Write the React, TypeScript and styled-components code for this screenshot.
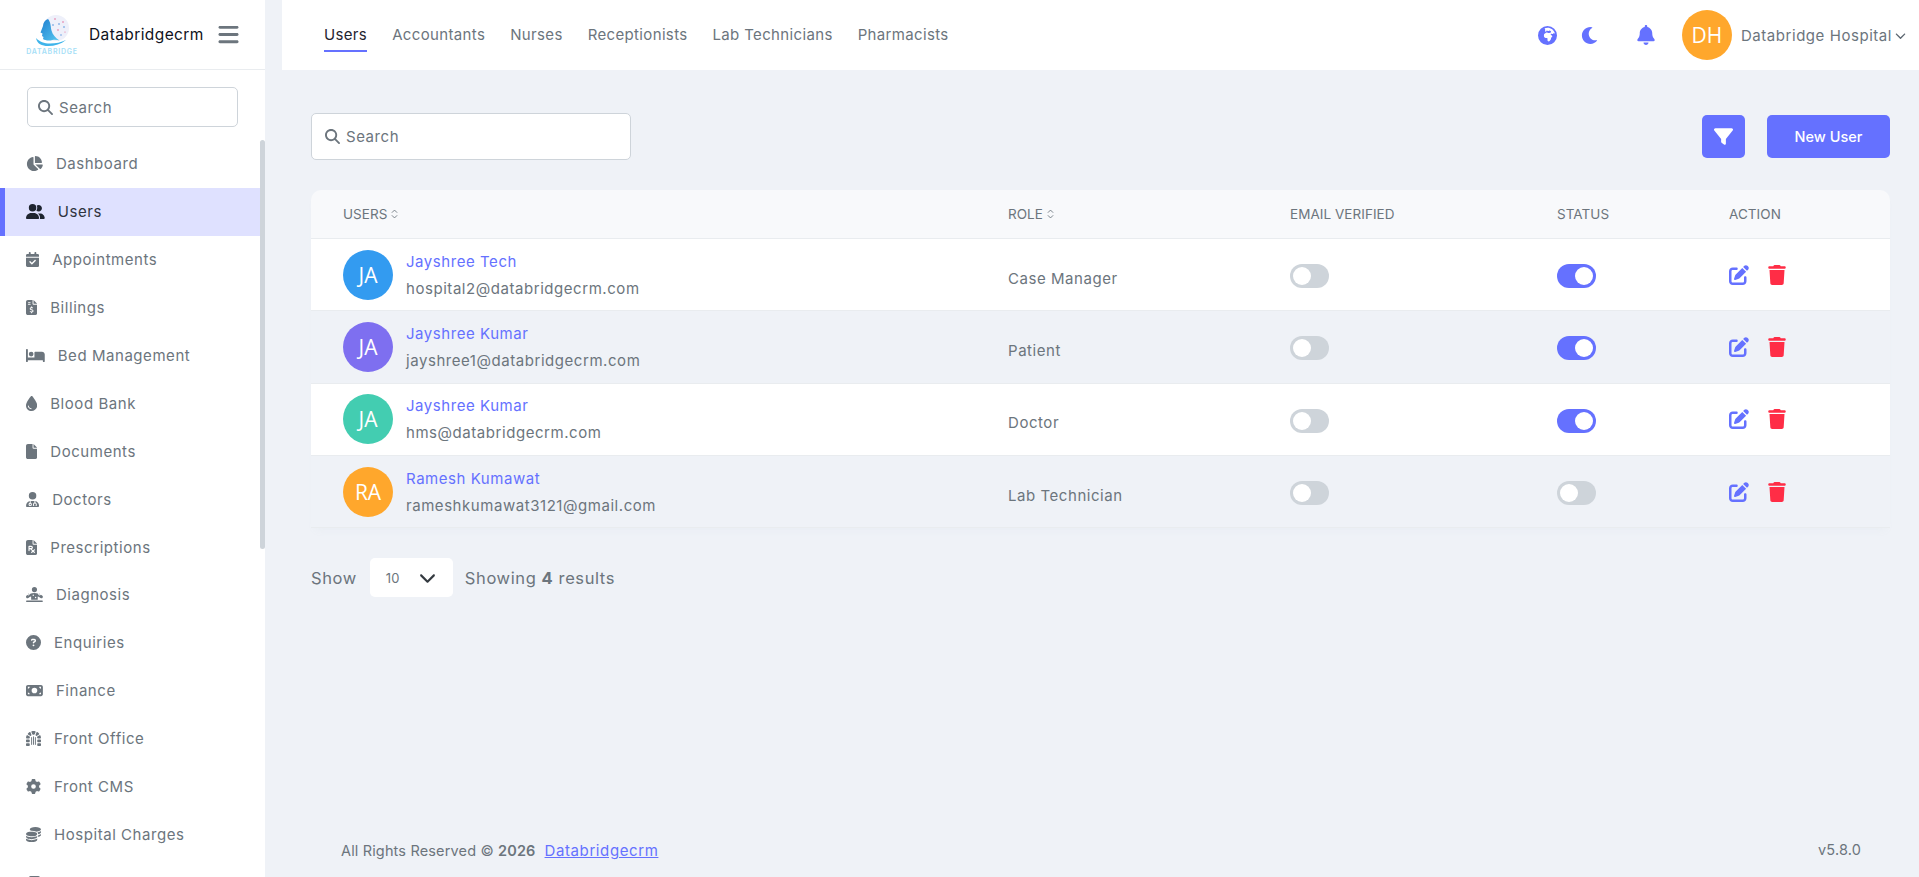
import React from "react";
import styled, { createGlobalStyle } from "styled-components";
import {
  FaBars, FaBed, FaBell, FaCalendarCheck, FaChevronDown, FaCircleQuestion, FaCoins, FaDroplet, FaDungeon,
  FaEarthAfrica, FaFile, FaFileInvoiceDollar, FaFilePrescription, FaFilter, FaGear, FaMagnifyingGlass, FaMoneyBill,
  FaPenToSquare, FaPersonDotsFromLine, FaTrash, FaUserDoctor, FaUserGroup, FaChartPie, FaNotesMedical,
} from "react-icons/fa6";
import { FaMoon } from "react-icons/fa";

const Global = createGlobalStyle`
  html, body { margin: 0; padding: 0; height: 100%; overflow: hidden; }
  body { font-family: "Inter", "Open Sans", sans-serif; font-size: 15px; letter-spacing: 0.55px; color: #6c757d; background: #eff2f7; }
  * { box-sizing: border-box; }
`;
const Shell = styled.div`display: flex; height: 877px; overflow: hidden;`;
const Sidebar = styled.aside`position: relative; flex: 0 0 265px; display: flex; flex-direction: column; background: #fff; overflow: hidden;`;
const Brand = styled.div`flex: 0 0 70px; display: flex; align-items: center; padding-left: 27px; border-bottom: 1px solid #e9ecef;`;
const LogoWrap = styled.div`width: 50px; display: flex; flex-direction: column; align-items: center; margin-right: 12px;`;
const LogoText = styled.span`font-size: 7px; line-height: 8px; letter-spacing: 0.75px; color: #a6e0f7; font-weight: 600; white-space: nowrap;`;
const BrandName = styled.span`font-size: 15.5px; letter-spacing: 0.4px; color: #0f1220; width: 128px; white-space: nowrap;`;
const Burger = styled.span`display: flex; color: #6c757d; font-size: 23px;`;
const SideSearchWrap = styled.div`padding: 17px 27px 0; flex: none;`;
const SearchBox = styled.label<{ $w: number; $h: number; $pad: number }>`
  display: flex; align-items: center; gap: 6px; width: ${(p) => p.$w}px; height: ${(p) => p.$h}px; padding-left: ${(p) => p.$pad}px;
  background: #fff; border: 1px solid #ced4da; border-radius: 5px; color: #6c757d; font-size: 15px;
  svg { font-size: 15px; flex: none; }
`;
const Nav = styled.nav`flex: 1; padding: 13px 5px 0 0; overflow: hidden;`;
const NavItem = styled.a<{ $active?: boolean; $units: number }>`
  display: flex; align-items: center; gap: 13px; height: 47.9px; padding-left: ${(p) => (p.$active ? 21 : 26)}px; white-space: nowrap;
  color: ${(p) => (p.$active ? "#2f3440" : "#6c757d")};
  background: ${(p) => (p.$active ? "#dfe1ff" : "transparent")};
  border-left: ${(p) => (p.$active ? "5px solid #6571ff" : "0")};
  svg { flex: none; height: 15px; width: ${(p) => (p.$units * 15) / 512}px; color: ${(p) => (p.$active ? "#1e2430" : "#6c757d")}; }
`;
const ScrollThumb = styled.div`position: absolute; top: 140px; right: 0; width: 5px; height: 409px; border-radius: 3px; background: #ced4da;`;
const Main = styled.div`flex: 1; display: flex; flex-direction: column; min-width: 0;`;
const Header = styled.header`flex: 0 0 70px; margin-left: 17px; padding: 0 13px 0 42px; background: #fff; display: flex; align-items: center;`;
const Tabs = styled.div`display: flex; gap: 25px; flex: 1; height: 100%; letter-spacing: 0.35px;`;
const Tab = styled.a<{ $active?: boolean }>`
  display: flex; align-items: center; height: 52px; padding-top: 18px; white-space: nowrap;
  color: ${(p) => (p.$active ? "#1f2430" : "#6c757d")};
  border-bottom: 2px solid ${(p) => (p.$active ? "#6571ff" : "transparent")};
`;
const HeaderIcon = styled.span<{ $size: number; $gap: number }>`display: flex; color: #6571ff; font-size: ${(p) => p.$size}px; margin-right: ${(p) => p.$gap}px;`;
const Avatar = styled.div<{ $bg: string }>`
  flex: none; width: 50px; height: 50px; border-radius: 50%; background: ${(p) => p.$bg}; color: #fff; letter-spacing: 0;
  display: flex; align-items: center; justify-content: center; font-family: "Open Sans", sans-serif; font-size: 21px;
`;
const UserName = styled.span`margin-left: 9px; white-space: nowrap;`;
const Caret = styled.span`display: flex; margin-left: 3px; font-size: 11px; color: #5c6670;`;
const Content = styled.main`flex: 1; display: flex; flex-direction: column; padding: 43px 29px 0 46px;`;
const Toolbar = styled.div`display: flex; align-items: flex-start; justify-content: space-between; height: 77px;`;
const ToolActions = styled.div`display: flex; gap: 22px; margin-top: 2px;`;
const IconBtn = styled.button`width: 43px; height: 43px; border: 0; border-radius: 5px; background: #6571ff; color: #fff; display: flex; align-items: center; justify-content: center; font-size: 19px;`;
const PrimaryBtn = styled.button`width: 123px; height: 43px; border: 0; border-radius: 5px; background: #6571ff; color: #fff; font: 500 14.5px "Inter", sans-serif;`;
const Table = styled.div`border-radius: 10px 10px 0 0; box-shadow: 0 6px 8px -4px rgba(160,170,185,0.06);`;
const Grid = styled.div`display: grid; grid-template-columns: 665px 282px 267px 172px 1fr; align-items: center; padding-left: 32px;`;
const THead = styled(Grid)`height: 49px; background: #f8f9fb; border-bottom: 1px solid #e9ecef; border-radius: 10px 10px 0 0; font-size: 13.5px; letter-spacing: 0.05px; color: #6c757d;`;
const Th = styled.span`display: flex; align-items: center; gap: 4px; text-transform: uppercase; white-space: nowrap;`;
const Row = styled(Grid)<{ $alt?: boolean }>`height: 72.3px; background: ${(p) => (p.$alt ? "#eff2f7" : "#fff")}; border-bottom: 1px solid #e9ecef;`;
const UserCell = styled.div`display: flex; align-items: center; gap: 13px;`;
const UserText = styled.div`display: flex; flex-direction: column; gap: 6px; line-height: 21px;`;
const Name = styled.a`color: #6571ff;`;
const Email = styled.span`color: #6c757d;`;
const Role = styled.span`padding-top: 7px;`;
const Switch = styled.span<{ $on?: boolean }>`
  display: flex; width: 39px; height: 24px; margin-top: 3px; padding: 3px; border-radius: 12px; background: ${(p) => (p.$on ? "#6571ff" : "#ced4da")};
  justify-content: ${(p) => (p.$on ? "flex-end" : "flex-start")};
  &::after { content: ""; width: 18px; height: 18px; border-radius: 50%; background: #fff; }
`;
const Actions = styled.div`display: flex; align-items: center; gap: 18px; font-size: 20px;`;
const EditIco = styled.span`display: flex; color: #6571ff;`;
const TrashIco = styled.span`display: flex; color: #ff2d46;`;
const Pager = styled.div`display: flex; align-items: center; margin-top: 30px; font-size: 16.5px; letter-spacing: 0.6px;`;
const PageSelect = styled.div`display: flex; align-items: center; justify-content: space-between; width: 83px; height: 39px; margin: 0 12px 0 13px; padding: 0 17px 0 16px; background: #fff; border-radius: 5px; font-size: 13px; letter-spacing: 0;`;
const PageCaret = styled.span`display: flex; color: #343a40; font-size: 17px;`;
const Footer = styled.footer`margin-top: auto; height: 42px; display: flex; justify-content: space-between; padding: 6px 29px 0 30px; font-size: 14.5px; letter-spacing: 0.15px;`;
const FooterLink = styled.a`margin-left: 9px; color: #6571ff; text-decoration: underline; font-size: 15px; letter-spacing: 0.6px;`;
const Copy = styled.strong`font-weight: 600;`;

const Sort = () => (
  <svg width="7" height="10" viewBox="0 0 8 11" fill="none" stroke="#6c757d" strokeWidth="1"><path d="M1 4l3-3 3 3M1 7l3 3 3-3" /></svg>
);
const Logo = () => (
  <svg width="50" height="34" viewBox="0 0 50 34">
    <defs>
      <linearGradient id="headBlue" x1="0" y1="0" x2="1" y2="1">
        <stop offset="0" stopColor="#1f7fd0" /><stop offset="1" stopColor="#58c8f0" />
      </linearGradient>
    </defs>
    <circle cx="29" cy="14" r="13" fill="#eef0fa" />
    <g fill="#e66a9a"><circle cx="28" cy="5" r=".8" /><circle cx="36" cy="8" r=".8" /><circle cx="31" cy="16" r=".8" /><circle cx="38" cy="18" r=".6" /></g>
    <g fill="#4f8fdc"><circle cx="32" cy="10" r=".8" /><circle cx="26" cy="11" r=".8" /><circle cx="37" cy="13" r=".8" /><circle cx="34" cy="21" r=".7" /></g>
    <path d="M21 5c-3 1-5 4-5 7l-2.500 6.500 2 1-.5 2.500 1.500 1-.5 2c2 1.500 6 2 9.500 1 2.500-.5 5 0 7 .5-4-2.500-7-6-8-10-1-4-.5-8-3.500-11.500z" fill="url(#headBlue)" />
    <path d="M9 24c1 6 6 8 12 8 7 0 13-2 18-6-5 2.500-10 3.500-16 3.500-6 0-10-1.500-14-5.500z" fill="#3fb4ea" />
  </svg>
);

const items: [string, React.ReactNode, number, boolean?][] = [
  ["Dashboard", <FaChartPie />, 576], ["Users", <FaUserGroup />, 640, true], ["Appointments", <FaCalendarCheck />, 448],
  ["Billings", <FaFileInvoiceDollar />, 384], ["Bed Management", <FaBed />, 640], ["Blood Bank", <FaDroplet />, 384],
  ["Documents", <FaFile />, 384], ["Doctors", <FaUserDoctor />, 448], ["Prescriptions", <FaFilePrescription />, 384],
  ["Diagnosis", <FaPersonDotsFromLine />, 576], ["Enquiries", <FaCircleQuestion />, 512], ["Finance", <FaMoneyBill />, 576],
  ["Front Office", <FaDungeon />, 512], ["Front CMS", <FaGear />, 512], ["Hospital Charges", <FaCoins />, 512], ["IPD/OPD", <FaNotesMedical />, 512],
];
const tabs = ["Users", "Accountants", "Nurses", "Receptionists", "Lab Technicians", "Pharmacists"];
const rows = [
  { i: "JA", bg: "#339bf0", n: "Jayshree Tech", e: "hospital2@databridgecrm.com", r: "Case Manager", s: true },
  { i: "JA", bg: "#7e6ff0", n: "Jayshree Kumar", e: "jayshree1@databridgecrm.com", r: "Patient", s: true },
  { i: "JA", bg: "#43cdb1", n: "Jayshree Kumar", e: "hms@databridgecrm.com", r: "Doctor", s: true },
  { i: "RA", bg: "#ffa72c", n: "Ramesh Kumawat", e: "rameshkumawat3121@gmail.com", r: "Lab Technician", s: false },
];

export default function App() {
  return (
    <Shell>
      <Global />
      <Sidebar>
        <Brand>
          <LogoWrap><Logo /><LogoText>DATABRIDGE</LogoText></LogoWrap>
          <BrandName>Databridgecrm</BrandName>
          <Burger><FaBars /></Burger>
        </Brand>
        <SideSearchWrap>
          <SearchBox $w={211} $h={40} $pad={10}><FaMagnifyingGlass />Search</SearchBox>
        </SideSearchWrap>
        <Nav>
          {items.map(([t, ic, u, a]) => <NavItem key={t} $active={a} $units={u}>{ic}{t}</NavItem>)}
        </Nav>
        <ScrollThumb />
      </Sidebar>
      <Main>
        <Header>
          <Tabs>{tabs.map((t, i) => <Tab key={t} $active={i === 0}>{t}</Tab>)}</Tabs>
          <HeaderIcon $size={19} $gap={24}><FaEarthAfrica /></HeaderIcon>
          <HeaderIcon $size={17} $gap={38}><FaMoon /></HeaderIcon>
          <HeaderIcon $size={20} $gap={26}><FaBell /></HeaderIcon>
          <Avatar $bg="#ffa72c">DH</Avatar>
          <UserName>Databridge Hospital</UserName>
          <Caret><FaChevronDown /></Caret>
        </Header>
        <Content>
          <Toolbar>
            <SearchBox $w={320} $h={47} $pad={13}><FaMagnifyingGlass />Search</SearchBox>
            <ToolActions>
              <IconBtn aria-label="Filter"><FaFilter /></IconBtn>
              <PrimaryBtn>New User</PrimaryBtn>
            </ToolActions>
          </Toolbar>
          <Table>
            <THead>
              <Th>Users <Sort /></Th><Th>Role <Sort /></Th><Th>Email Verified</Th><Th>Status</Th><Th>Action</Th>
            </THead>
            {rows.map((r, i) => (
              <Row key={r.e} $alt={i % 2 === 1}>
                <UserCell>
                  <Avatar $bg={r.bg}>{r.i}</Avatar>
                  <UserText><Name>{r.n}</Name><Email>{r.e}</Email></UserText>
                </UserCell>
                <Role>{r.r}</Role>
                <Switch />
                <Switch $on={r.s} />
                <Actions><EditIco><FaPenToSquare /></EditIco><TrashIco><FaTrash /></TrashIco></Actions>
              </Row>
            ))}
          </Table>
          <Pager>
            Show
            <PageSelect>10<PageCaret><FaChevronDown /></PageCaret></PageSelect>
            <span>Showing <b>4</b> results</span>
          </Pager>
          <Footer>
            <span>All Rights Reserved © <Copy>2026</Copy><FooterLink>Databridgecrm</FooterLink></span>
            <span>v5.8.0</span>
          </Footer>
        </Content>
      </Main>
    </Shell>
  );
}
